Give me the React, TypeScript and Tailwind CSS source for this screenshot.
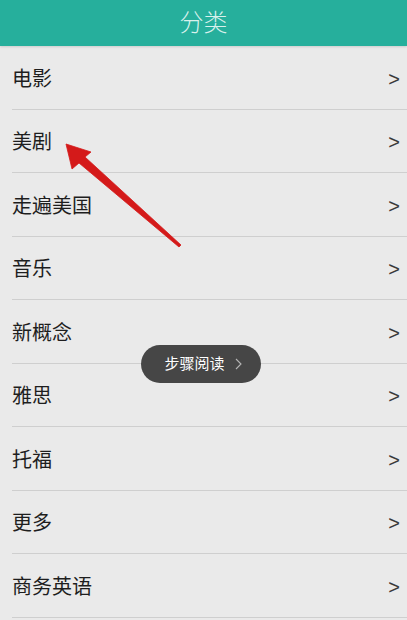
const categories = ["电影", "美剧", "走遍美国", "音乐", "新概念", "雅思", "托福", "更多", "商务英语"];

const font = "font-['Roboto','Noto_Sans_CJK_SC',sans-serif]";

function CategoryRow({ label }: { label: string }) {
  return (
    <div className="ml-3 flex h-[63.5px] items-center justify-between border-b border-[#cfcfcf] pt-[3px] pr-[7px]">
      <span className="text-[20px] text-[#1e1e1e]">{label}</span>
      <span className="font-['Liberation_Sans',sans-serif] text-[20px] text-[#3a3a3a]">&gt;</span>
    </div>
  );
}

export default function App() {
  return (
    <div className={`relative h-[620px] w-[407px] overflow-hidden bg-[#eaeaea] ${font}`}>
      <header className="flex h-[46px] items-center justify-center bg-[#26af9c] shadow-[0_1px_2px_rgba(0,0,0,0.12)]">
        <h1 className="text-[24px] font-light text-[#d8f1ec]">分类</h1>
      </header>

      <div>
        {categories.map((c) => (
          <CategoryRow key={c} label={c} />
        ))}
      </div>

      {/* annotation arrow */}
      <svg className="pointer-events-none absolute left-0 top-0" width="407" height="620">
        <polygon
          points="66,144 91,152 85,157 181,245 179,247 79,163 72,169"
          fill="#d41a1a"
          stroke="#d41a1a"
          strokeWidth="0.8"
          strokeLinejoin="round"
        />
      </svg>

      {/* toast */}
      <div className="absolute left-[141px] top-[345px] flex h-[38px] w-[120px] items-center justify-center gap-[10px] rounded-full bg-[#464646] pl-1">
        <span className="text-[15px] text-white">步骤阅读</span>
        <svg width="7" height="12" viewBox="0 0 7 12">
          <path d="M1 1 L6 6 L1 11" fill="none" stroke="#b5b5b5" strokeWidth="1.1" />
        </svg>
      </div>
    </div>
  );
}
